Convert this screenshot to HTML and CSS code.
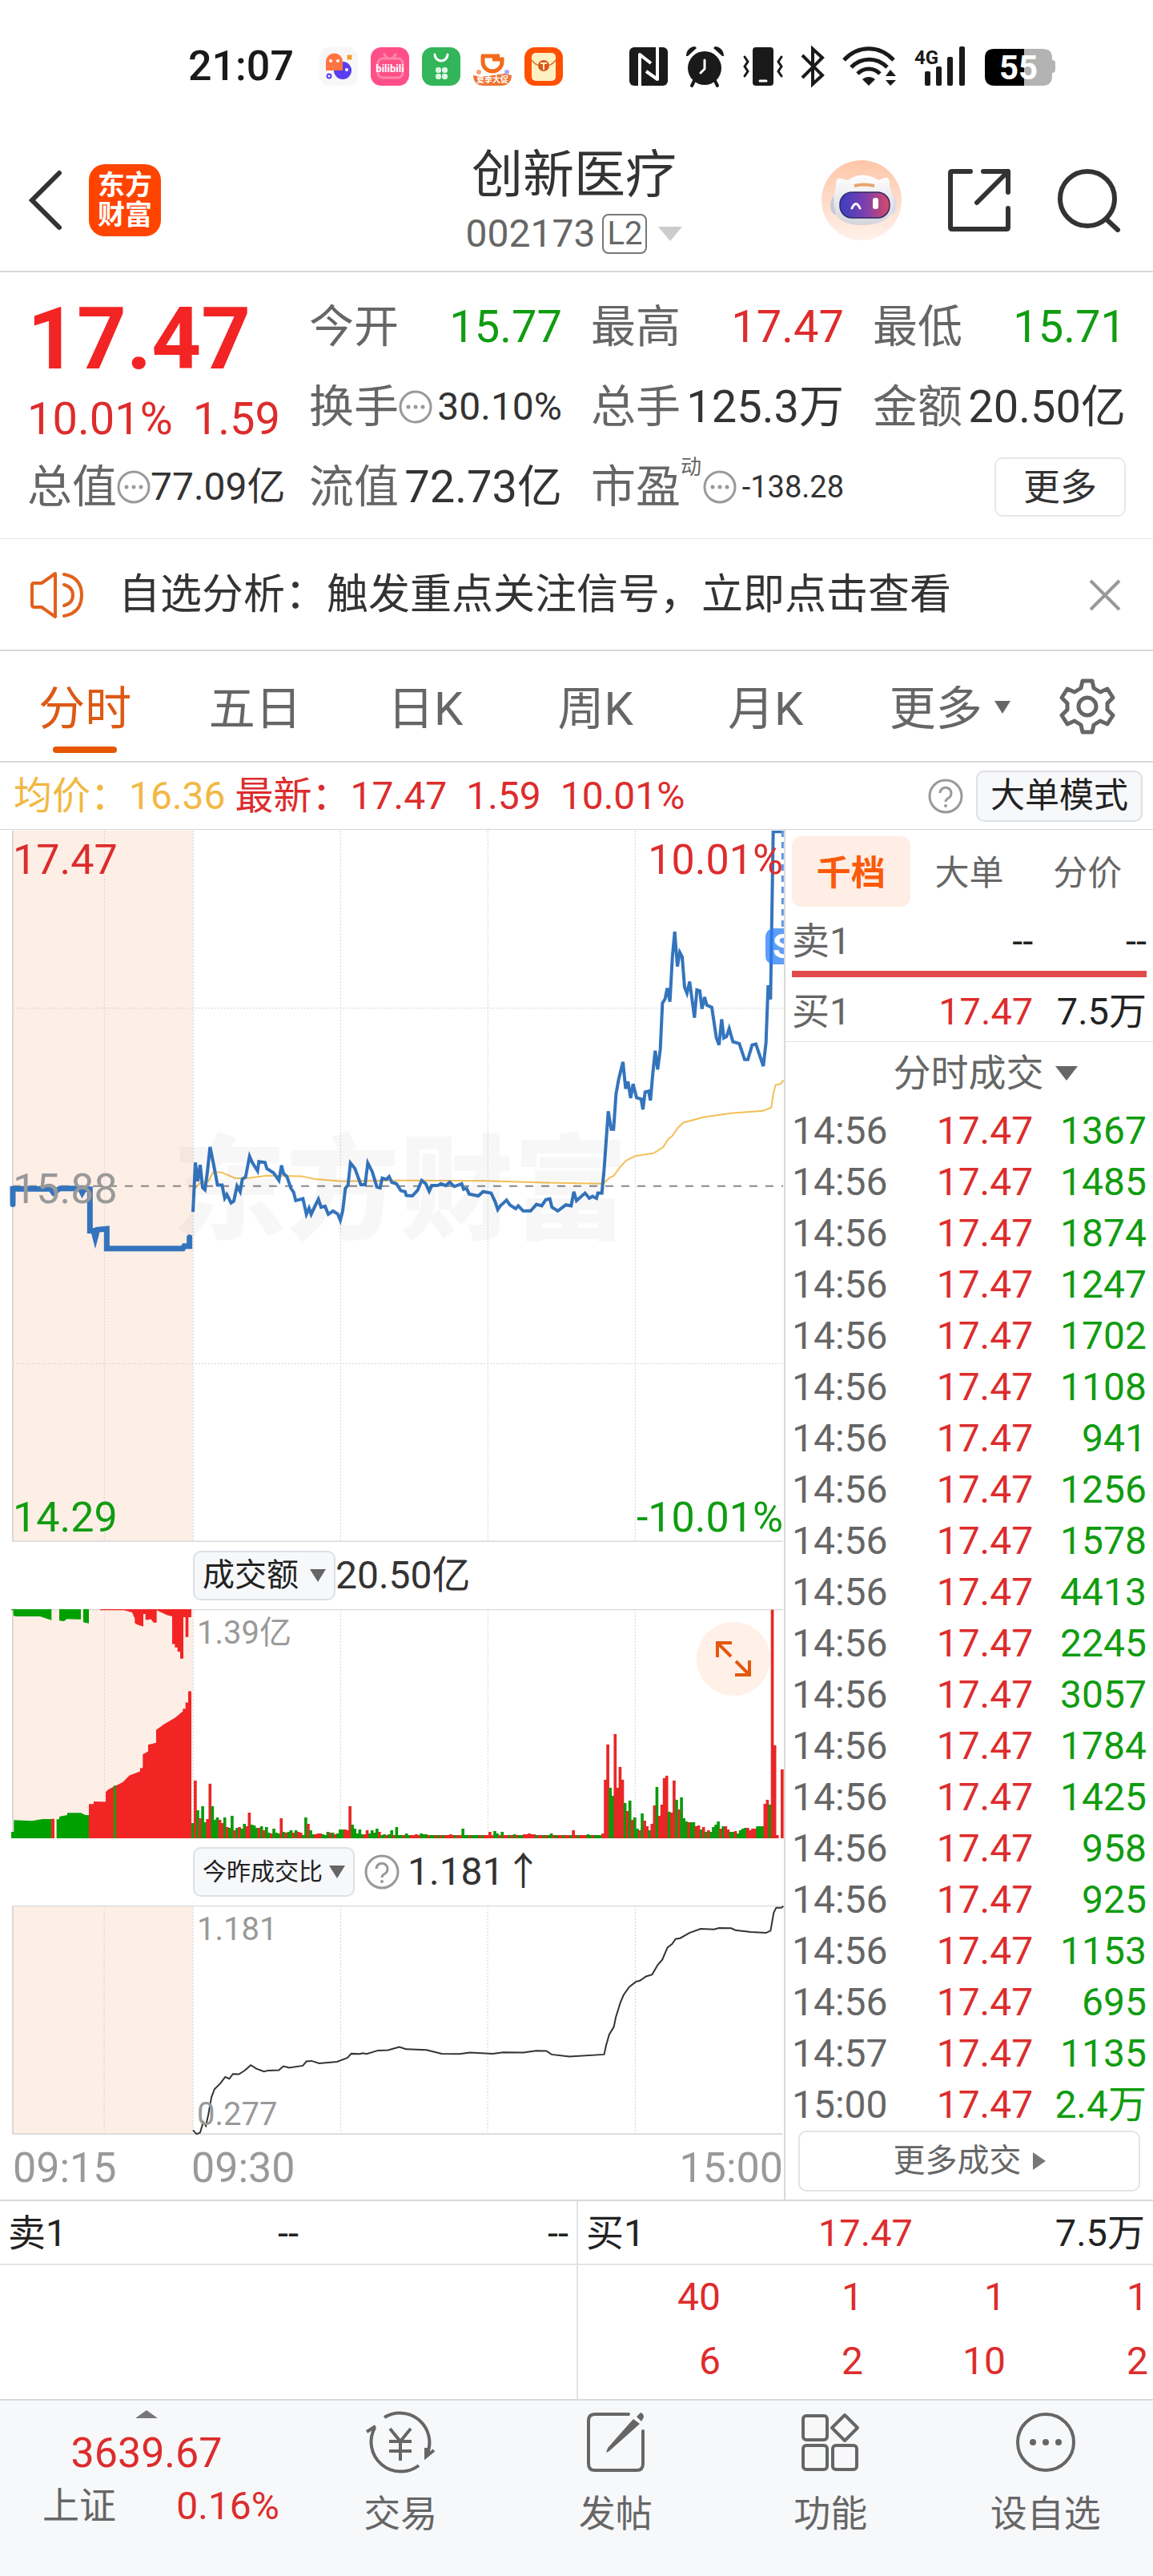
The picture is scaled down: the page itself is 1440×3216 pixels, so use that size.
FILE: index.html
```html
<!DOCTYPE html>
<html lang="zh-CN">

<head>
    <meta charset="utf-8">
    <meta name="viewport" content="width=device-width, initial-scale=1.0">
    <title>创新医疗 002173</title>
    <link rel="stylesheet" href="styles.css">
</head>

<body>
    <!-- 状态栏 -->
    <div class="status">
        <span class="clock">21:07</span>
        <div class="status-apps">
            <svg width="48" height="48" viewBox="0 0 48 48">
                <rect width="48" height="48" rx="13" fill="#f7f7f7"/>
                <circle cx="29" cy="29" r="11" fill="#5a3df0"/>
                <path d="M8 29V18a10 10 0 0 1 21 0v11z" fill="#ff7440"/>
                <circle cx="14" cy="17" r="2" fill="#fff"/><circle cx="23" cy="17" r="2" fill="#fff"/><circle cx="34" cy="28" r="2" fill="#fff"/>
                <circle cx="12" cy="36" r="2.5" fill="none" stroke="#5a3df0" stroke-width="2"/>
                <path d="M35 10l5 5m0-5l-5 5" stroke="#f59a23" stroke-width="3"/>
            </svg>
            <svg width="48" height="48" viewBox="0 0 48 48">
                <rect width="48" height="48" rx="13" fill="#ff4f88"/>
                <path d="M16 8l5 6m11-6l-5 6" stroke="#ff85ab" stroke-width="3"/>
                <rect x="9" y="14" width="31" height="24" rx="6" fill="none" stroke="#ff85ab" stroke-width="3"/>
                <text x="24" y="31" text-anchor="middle" class="bili">bilibili</text>
            </svg>
            <svg width="48" height="48" viewBox="0 0 48 48">
                <rect width="48" height="48" rx="13" fill="#33b55a"/>
                <path d="M16 9a8 8 0 0 0 16 0" fill="none" stroke="#fff" stroke-width="3" stroke-linecap="round"/>
                <g fill="#dff5e5"><rect x="17" y="25" width="7" height="7" rx="3"/><rect x="25" y="25" width="7" height="7" rx="3"/><rect x="17" y="33" width="7" height="7" rx="3"/><rect x="25" y="33" width="7" height="7" rx="3"/></g>
            </svg>
            <svg width="48" height="48" viewBox="0 0 48 48">
                <path d="M12 11v7a12 12 0 0 0 24 0v-3H24" fill="none" stroke="#f26a1b" stroke-width="5"/>
                <path d="M10 11h23" stroke="#f26a1b" stroke-width="5"/>
                <path d="M0 35l9 2 30-4 9 2c0 9-6 13-13 13H13C6 48 0 44 0 35z" fill="#ee7433"/>
                <circle cx="7" cy="31" r="3" fill="#f5a27a"/><circle cx="42" cy="31" r="3" fill="#a9a6f0"/>
                <text x="24" y="44" text-anchor="middle" class="promo">夏季大促</text>
            </svg>
            <svg width="48" height="48" viewBox="0 0 48 48">
                <rect width="48" height="48" rx="13" fill="#ff5000"/>
                <rect x="9" y="7" width="30" height="35" rx="5" fill="#fff0c4"/>
                <path d="M9 16c5 7 9 7 15 7s10 0 15-7" fill="none" stroke="#d9752c" stroke-width="1.5"/>
                <circle cx="24" cy="23" r="7" fill="#d9581c"/>
                <path d="M20 20h8m-4 0v8" stroke="#fff0c4" stroke-width="2"/>
            </svg>
        </div>
        <div class="status-sys">
            <svg width="48" height="50" viewBox="0 0 48 50">
                <rect y="1" width="48" height="48" rx="6" fill="#1a1a1a"/>
                <path d="M13 50V10L27 21M35 0V41L21 31" fill="none" stroke="#fff" stroke-width="4" stroke-linejoin="round"/>
            </svg>
            <svg width="50" height="50" viewBox="0 0 50 50">
                <path d="M11 43l-3 6m29-6l3 6" stroke="#1a1a1a" stroke-width="4" stroke-linecap="round"/>
                <circle cx="24" cy="27" r="21" fill="#1a1a1a"/>
                <path d="M1 12C1 4 7 0 12 0l2 2L3 12zM48 12C48 4 42 0 37 0l-2 2 11 10z" fill="#1a1a1a"/>
                <path d="M24 17v11l-5 5" fill="none" stroke="#fff" stroke-width="3" stroke-linecap="round"/>
            </svg>
            <svg width="50" height="50" viewBox="0 0 50 50" fill="none" stroke="#1a1a1a" stroke-width="3">
                <rect x="12" y="1" width="26" height="48" rx="4" fill="#1a1a1a" stroke="none"/>
                <path d="M2 13l4 6-4 6 4 6-4 6M48 13l-4 6 4 6-4 6 4 6" stroke-linecap="round"/>
                <path d="M21 43h8" stroke="#fff" stroke-linecap="round"/>
            </svg>
            <svg width="30" height="50" viewBox="0 0 30 50" fill="none" stroke="#1a1a1a" stroke-width="4">
                <path d="M2 11l25 25-12 11V3l12 11L2 39"/>
            </svg>
            <svg width="68" height="50" viewBox="0 0 68 50" fill="none" stroke="#1a1a1a" stroke-width="5">
                <path d="M2 17c18-19 44-19 62 0M11 26c13-13 32-13 45 0M19 34c8-8 20-8 28 0"/>
                <path d="M25 41c5-4 11-4 16 0l-8 8zM60 29l7 8H54zM60 49l7-7H54z" fill="#1a1a1a" stroke="none"/>
            </svg>
            <svg width="66" height="50" viewBox="0 0 66 50">
                <text x="0" y="22" class="net">4G</text>
                <g fill="#1a1a1a"><rect x="13" y="31" width="7" height="18" rx="2"/><rect x="27" y="25" width="7" height="24" rx="2"/><rect x="41" y="13" width="7" height="36" rx="2"/><rect x="56" y="0" width="7" height="49" rx="2"/></g>
            </svg>
            <svg width="88" height="50" viewBox="0 0 88 50">
                <path d="M49 3h23q12 0 12 11v3q4 0 4 4v8q0 4-4 4v4q0 12-12 12H49z" fill="#b3b3b3"/>
                <path d="M49 3H12Q0 3 0 14v23q0 12 12 12h37z" fill="#000"/>
                <text x="42" y="41" text-anchor="middle" class="battery">55</text>
            </svg>
        </div>
    </div>

    <!-- 标题栏 -->
    <header class="header">
        <div class="header-side">
            <button class="icon-btn" aria-label="返回">
                <svg width="46" height="76" viewBox="0 0 46 76" fill="none" stroke="#333" stroke-width="6" stroke-linecap="round"><path d="M40 4L6 38l34 34"/></svg>
            </button>
            <a class="logo" href="#">东方<br>财富</a>
        </div>
        <div class="title">
            <h1>创新医疗</h1>
            <button class="code">002173<span class="level">L2</span><i class="tri tri-light"></i></button>
        </div>
        <div class="header-side header-right">
            <button class="icon-btn" aria-label="智能助手">
                <svg width="100" height="100" viewBox="0 0 100 100">
                    <defs>
                        <linearGradient id="halo" x1="0" y1="0" x2="0" y2="1"><stop offset="0" stop-color="#fdc6a8"/><stop offset="1" stop-color="#fff1ea"/></linearGradient>
                        <linearGradient id="visor"><stop offset="0" stop-color="#3a3fc0"/><stop offset=".5" stop-color="#7c3fae"/><stop offset="1" stop-color="#d84a66"/></linearGradient>
                        <linearGradient id="helmet" x1="0" y1="0" x2="0" y2="1"><stop offset="0" stop-color="#fff"/><stop offset="1" stop-color="#d4d4dc"/></linearGradient>
                    </defs>
                    <circle cx="50" cy="50" r="50" fill="url(#halo)"/>
                    <ellipse cx="18" cy="56" rx="7" ry="12" fill="#c9c9d4"/><ellipse cx="87" cy="56" rx="7" ry="12" fill="#dcdce6"/>
                    <path d="M18 34q-1-14 7-11l8 2q18-13 38 0l8-3q7-2 6 11 7 14 3 29-5 19-37 19T17 62q-4-15 1-28z" fill="url(#helmet)"/>
                    <rect x="23" y="40" width="62" height="32" rx="15" fill="url(#visor)" stroke="#2c2a66" stroke-width="1.5"/>
                    <path d="M38 60q5-11 10 0" fill="none" stroke="#fff" stroke-width="3" stroke-linecap="round"/>
                    <rect x="64" y="47" width="7" height="14" rx="3" fill="#fff"/>
                    <path d="M41 32q12-3 25 0" stroke="#e7a56a" stroke-width="4" fill="none"/>
                </svg>
            </button>
            <button class="icon-btn" aria-label="分享">
                <svg width="78" height="80" viewBox="0 0 78 80" fill="none" stroke="#333" stroke-width="6" stroke-linecap="round" stroke-linejoin="round"><path d="M28 4H5q-2 0-2 2v68q0 2 2 2h68q2 0 2-2V50M44 4h31v26M75 4L36 43"/></svg>
            </button>
            <button class="icon-btn" aria-label="搜索">
                <svg width="80" height="80" viewBox="0 0 80 80" fill="none" stroke="#333" stroke-width="6" stroke-linecap="round"><circle cx="38" cy="38" r="34"/><path d="M62 64l14 13"/></svg>
            </button>
        </div>
    </header>

    <!-- 行情数据 -->
    <section class="quote">
        <div class="price-box">
            <div class="price">17.47</div>
            <div class="change"><span>10.01%</span><span>1.59</span></div>
        </div>
        <div class="item"><span>今开</span><b class="green">15.77</b></div>
        <div class="item"><span>最高</span><b class="red">17.47</b></div>
        <div class="item"><span>最低</span><b class="green">15.71</b></div>
        <div class="item"><span>换手</span><svg class="dots"><use href="#dots"/></svg><b class="mid">30.10%</b></div>
        <div class="item"><span>总手</span><b>125.3万</b></div>
        <div class="item"><span>金额</span><b>20.50亿</b></div>
        <div class="item"><span>总值</span><svg class="dots"><use href="#dots"/></svg><b class="mid">77.09亿</b></div>
        <div class="item"><span>流值</span><b>72.73亿</b></div>
        <div class="item"><span>市盈<sup>动</sup></span><svg class="dots dots-pe"><use href="#dots"/></svg><b class="small">-138.28</b></div>
        <div class="item"><button class="more">更多</button></div>
    </section>

    <!-- 公用图标 -->
    <svg class="defs" aria-hidden="true">
        <symbol id="dots" viewBox="0 0 42 42">
            <circle cx="21" cy="21" r="19" fill="none" stroke="#999" stroke-width="3"/>
            <circle cx="12" cy="21" r="2.5" fill="#999"/><circle cx="21" cy="21" r="2.5" fill="#999"/><circle cx="30" cy="21" r="2.5" fill="#999"/>
        </symbol>
        <symbol id="help" viewBox="0 0 44 44">
            <circle cx="22" cy="22" r="20" fill="none" stroke="#999" stroke-width="3"/>
            <path d="M15 18a7 7 0 1 1 11 6q-4 2-4 5" fill="none" stroke="#999" stroke-width="3"/><circle cx="22" cy="34" r="2" fill="#999"/>
        </symbol>
    </svg>

    <!-- 提示条 -->
    <div class="notice">
        <svg width="68" height="58" viewBox="0 0 68 58" fill="none" stroke="#e2611c" stroke-width="4" stroke-linejoin="round" stroke-linecap="round">
            <path d="M4 14q-2 0-2 3v24q0 3 3 3h9l17 12V2L14 14zM42 3q22 4 22 26T42 55M42 16q11 3 11 13t-11 13"/>
        </svg>
        <a href="#">自选分析：触发重点关注信号，立即点击查看</a>
        <button class="icon-btn" aria-label="关闭">
            <svg width="40" height="40" viewBox="0 0 40 40" stroke="#999" stroke-width="4"><path d="M2 2l36 36M38 2L2 38"/></svg>
        </button>
    </div>

    <!-- 周期切换 -->
    <nav class="tabs">
        <button class="tab active">分时</button>
        <button class="tab">五日</button>
        <button class="tab">日K</button>
        <button class="tab">周K</button>
        <button class="tab">月K</button>
        <button class="tab">更多<i class="tri tri-small"></i></button>
        <button class="icon-btn gear" aria-label="设置">
            <svg width="70" height="70" viewBox="0 0 70 70" fill="none" stroke="#666" stroke-width="5" stroke-linejoin="round">
                <path d="M29 3h12l2 9 8 5 9-4 7 11-7 7v8l7 7-7 11-9-4-8 5-2 9H29l-2-9-8-5-9 4-7-11 7-7v-8l-7-7 7-11 9 4 8-5z"/><circle cx="35" cy="35" r="11"/>
            </svg>
        </button>
    </nav>

    <div class="latest">
        <span class="avg">均价：16.36</span>
        <span class="red">最新：17.47</span>
        <span class="red">1.59</span>
        <span class="red">10.01%</span>
        <svg class="help"><use href="#help"/></svg>
        <button class="pill">大单模式</button>
    </div>

    <main class="main">
        <!-- 分时图 -->
        <div class="charts">
            <div class="chart price-chart">
                <span class="watermark">东方财富</span>
                <svg class="plot" viewBox="0 29 2937 1513" preserveAspectRatio="none">
                    <rect class="premarket" x="48" y="29" width="676" height="1513"/>
                    <path class="grid" d="M391 29V1542M724 29V1542M1276 29V1542M1828 29V1542M2380 29V1542M48 407H2934M48 1163H2934"/>
                    <path class="frame" d="M48 29V1541H2934"/>
                    <path class="zero" d="M48 785H2934"/>
                    <polyline class="line avg-line" points="732,790 750,778 780,775 800,755 830,756 880,768 920,769 1000,763 1130,764 1180,770 1280,775 1470,773 1820,774 2040,778 2260,780 2285,767 2300,763 2320,747 2345,731 2380,721 2450,715 2485,702 2505,684 2518,679 2540,661 2560,650 2640,638 2740,630 2860,625 2890,618 2897,590 2906,570 2925,568 2935,560"/>
                    <polyline class="line pre-line" points="48,824 48,791 190,791 200,799 225,790 300,790 308,799 315,792 337,792 337,880 350,880 357,895 365,878 400,876 400,918 685,918 690,913 710,913 710,894"/>
                    <polyline class="line" points="723,840 732,735 741,775 750,740 759,788 768,793 777,755 787,702 800,738 815,783 832,783 842,811 850,803 866,821 876,817 888,785 900,797 908,770 920,766 935,722 945,735 965,753 970,733 993,735 1000,748 1025,757 1045,773 1055,741 1062,758 1075,765 1090,790 1100,798 1108,816 1135,812 1148,845 1158,832 1166,845 1180,828 1193,813 1203,830 1218,828 1230,845 1248,838 1266,845 1275,858 1284,838 1294,790 1304,783 1313,736 1330,748 1352,782 1368,782 1378,736 1395,755 1412,787 1424,789 1432,768 1448,771 1458,765 1468,777 1485,780 1502,795 1518,797 1522,805 1545,806 1565,794 1580,773 1595,780 1608,796 1618,784 1640,784 1652,780 1670,784 1685,777 1702,786 1730,780 1737,792 1748,790 1758,802 1792,806 1810,797 1840,800 1855,818 1865,835 1875,827 1898,815 1910,825 1932,833 1942,827 1960,838 1988,838 2010,824 2030,827 2045,814 2060,812 2068,830 2090,838 2120,825 2140,827 2150,797 2160,816 2192,800 2208,811 2220,807 2235,811 2240,800 2255,800 2263,753 2279,626 2290,664 2299,664 2308,590 2318,558 2334,521 2344,578 2353,563 2363,598 2372,568 2385,597 2402,600 2409,622 2417,585 2430,583 2437,603 2446,545 2455,497 2464,537 2474,494 2482,396 2492,387 2500,364 2510,393 2519,300 2528,244 2538,318 2547,288 2556,298 2565,362 2574,375 2584,350 2602,427 2611,368 2622,370 2630,408 2640,383 2648,400 2667,405 2684,470 2694,485 2704,430 2712,470 2722,467 2732,450 2746,478 2770,482 2790,516 2802,516 2818,485 2832,483 2860,530 2870,480 2878,358 2887,388 2897,31 2935,31"/>
                    <path class="mark" d="M2932 29V236"/>
                </svg>
                <span class="badge">S</span>
                <div class="labels">
                    <div><span class="red">17.47</span><span class="red">10.01%</span></div>
                    <div><span>15.88</span></div>
                    <div><span class="green">14.29</span><span class="green">-10.01%</span></div>
                </div>
            </div>

            <!-- 成交额 -->
            <div class="chart-head">
                <button class="pill">成交额<i class="tri tri-small"></i></button>
                <span>20.50亿</span>
            </div>
            <div class="chart sub-chart">
                <svg class="plot" id="volume" viewBox="0 238 2937 857" preserveAspectRatio="none">
                    <rect class="premarket" x="48" y="238" width="676" height="857"/>
                    <path class="grid" d="M391 238V1095M724 238V1095M1276 238V1095M1828 238V1095M2380 238V1095"/>
                    <path class="frame" d="M48 1095V239H2934"/>
                    <path fill="#00a000" d="M42 237H193V279L150 265H60L50 262V242H42ZM222 237H303V276L250 275L240 283L222 281ZM312 237H333V291L312 287ZM42 1095V1071H52V1027L120 1030L160 1023H192V1095ZM212 1095V1024H222V1014L252 1008V1000H303L320 1008H333V1095Z"/>
                    <path fill="#f22424" d="M375 237H717V268H706V342H695V268H687V423H675V397H665V381H655V368H645V265L625 260L590 243H587V288H575L565 275L556 278H545V256H537V303L515 296L505 290V273L495 250L465 242H375ZM192 1022H204V1095H192ZM333 1095V967H351V957L396 959V922L406 912L460 885L485 860L525 845V832H535V781L555 770V745L585 738V690L615 668L655 645L685 620V610H695V587H705V545H717V1095Z"/>
                    <path fill="#3f8a12" d="M425 898H436V1095H425Z"/>
                </svg>
                <span class="top-label">1.39亿</span>
                <button class="expand" aria-label="放大">
                    <svg width="44" height="44" viewBox="0 0 44 44" fill="none" stroke="#e2590f" stroke-width="4"><path d="M2 20V2h18M2 2l17 17M42 24v18H24M42 42L25 25"/></svg>
                </button>
            </div>

            <!-- 今昨成交比 -->
            <div class="chart-head">
                <button class="pill pill-small">今昨成交比<i class="tri tri-small"></i></button>
                <svg class="help"><use href="#help"/></svg>
                <span>1.181↑</span>
            </div>
            <div class="chart sub-chart">
                <svg class="plot" viewBox="0 268 1535 857" preserveAspectRatio="none">
                    <rect class="premarket" x="25" y="268" width="353" height="857"/>
                    <path class="grid" d="M204 268V1125M378 268V1125M667 268V1125M955 268V1125M1244 268V1125"/>
                    <path class="frame" d="M25 1123V269H1533M25 1123H1533"/>
                    <polyline class="line ratio-line" points="378,1108 385,1123 392,1117 398,1078 403,1092 408,1050 414,985 420,955 432,932 441,909 449,916 456,898 468,899 480,884 491,865 502,878 517,889 525,885 546,884 555,869 566,875 593,867 600,851 610,849 625,858 660,852 680,838 688,822 705,823 710,820 718,823 740,810 760,809 782,797 795,805 835,808 865,822 900,823 920,818 965,822 985,817 1025,818 1050,811 1070,812 1080,825 1115,833 1183,825 1187,790 1193,750 1202,722 1206,685 1215,630 1221,603 1232,573 1245,553 1253,549 1265,533 1277,526 1288,490 1297,470 1307,425 1316,412 1323,393 1332,390 1350,370 1372,355 1398,357 1408,352 1432,353 1440,360 1470,367 1500,370 1509,362 1515,295 1520,276 1530,276 1534,270"/>
                </svg>
                <span class="top-label">1.181</span>
                <span class="bottom-label">0.277</span>
            </div>
            <div class="axis"><span>09:15</span><span>09:30</span><span>15:00</span></div>
        </div>

        <!-- 盘口 -->
        <aside class="side">
            <div class="side-tabs">
                <button class="active">千档</button>
                <button>大单</button>
                <button>分价</button>
            </div>
            <div class="level-row"><span>卖1</span><b>--</b><b>--</b></div>
            <div class="ratio-bar"></div>
            <div class="level-row"><span>买1</span><b class="red">17.47</b><b>7.5万</b></div>
            <button class="side-title">分时成交<i class="tri"></i></button>
            <table class="trades">
                <tr><td>14:56</td><td>17.47</td><td>1367</td></tr>
                <tr><td>14:56</td><td>17.47</td><td>1485</td></tr>
                <tr><td>14:56</td><td>17.47</td><td>1874</td></tr>
                <tr><td>14:56</td><td>17.47</td><td>1247</td></tr>
                <tr><td>14:56</td><td>17.47</td><td>1702</td></tr>
                <tr><td>14:56</td><td>17.47</td><td>1108</td></tr>
                <tr><td>14:56</td><td>17.47</td><td>941</td></tr>
                <tr><td>14:56</td><td>17.47</td><td>1256</td></tr>
                <tr><td>14:56</td><td>17.47</td><td>1578</td></tr>
                <tr><td>14:56</td><td>17.47</td><td>4413</td></tr>
                <tr><td>14:56</td><td>17.47</td><td>2245</td></tr>
                <tr><td>14:56</td><td>17.47</td><td>3057</td></tr>
                <tr><td>14:56</td><td>17.47</td><td>1784</td></tr>
                <tr><td>14:56</td><td>17.47</td><td>1425</td></tr>
                <tr><td>14:56</td><td>17.47</td><td>958</td></tr>
                <tr><td>14:56</td><td>17.47</td><td>925</td></tr>
                <tr><td>14:56</td><td>17.47</td><td>1153</td></tr>
                <tr><td>14:56</td><td>17.47</td><td>695</td></tr>
                <tr><td>14:57</td><td>17.47</td><td>1135</td></tr>
                <tr><td>15:00</td><td>17.47</td><td>2.4万</td></tr>
            </table>
            <button class="more-trades">更多成交<i class="tri-right"></i></button>
        </aside>
    </main>

    <!-- 委托队列 -->
    <section class="orders">
        <div class="order-col">
            <div class="order-head"><span>卖1</span><span>--</span><span>--</span></div>
        </div>
        <div class="order-col">
            <div class="order-head"><span>买1</span><span class="red">17.47</span><span>7.5万</span></div>
            <div class="queue">
                <span>40</span><span>1</span><span>1</span><span>1</span>
                <span>6</span><span>2</span><span>10</span><span>2</span>
            </div>
        </div>
    </section>

    <!-- 底部导航 -->
    <footer class="footer">
        <a class="index" href="#">
            <i class="tri-up"></i>
            <strong>3639.67</strong>
            <span class="index-row"><span>上证</span><span class="red">0.16%</span></span>
        </a>
        <a class="nav-item" href="#">
            <svg width="88" height="80" viewBox="0 0 88 80" fill="none" stroke="#666" stroke-width="4">
                <path d="M24 9a37 37 0 0 1 53 47M67 69A37 37 0 0 1 12 22M2 27l11-7M86 50l-10 8V47"/>
                <path d="M31 23l13 16 13-16M30 39h28M30 51h28M44 39v24"/>
            </svg>
            <span>交易</span>
        </a>
        <a class="nav-item" href="#">
            <svg width="76" height="80" viewBox="0 0 76 80" fill="none" stroke="#666" stroke-width="4">
                <path d="M54 5H12q-8 0-8 8v54q0 8 8 8h52q8 0 8-8V26" stroke-linecap="round"/>
                <path d="M60 11l8 6-38 34-4 2 2-6zM64 8l5-5q4 1 4 6l-3 5z" fill="#666" stroke="none"/>
            </svg>
            <span>发帖</span>
        </a>
        <a class="nav-item" href="#">
            <svg width="76" height="80" viewBox="0 0 76 80" fill="none" stroke="#666" stroke-width="4" stroke-linejoin="round">
                <rect x="4" y="7" width="30" height="30" rx="4"/><rect x="4" y="44" width="30" height="30" rx="4"/><rect x="41" y="44" width="30" height="30" rx="4"/><path d="M56 6l16 16-16 16-16-16z"/>
            </svg>
            <span>功能</span>
        </a>
        <a class="nav-item" href="#">
            <svg width="76" height="80" viewBox="0 0 76 80" fill="none" stroke="#666" stroke-width="4">
                <circle cx="38" cy="40" r="35"/><g fill="#666" stroke="none"><circle cx="22" cy="40" r="4"/><circle cx="38" cy="40" r="4"/><circle cx="54" cy="40" r="4"/></g>
            </svg>
            <span>设自选</span>
        </a>
    </footer>

    <script src="volume.js"></script>
</body>

</html>
```
FILE: styles.css
```css
* {
    box-sizing: border-box;
}

body {
    margin: 0;
    background-color: #fff;
    color: #333;
    font-family: Roboto, "Noto Sans CJK SC", sans-serif;
    font-size: 48px;
    line-height: 1;
}

button {
    padding: 0;
    border: none;
    background: none;
    color: inherit;
    font: inherit;
    cursor: pointer;
}

a {
    color: inherit;
    text-decoration: none;
}

b {
    font-weight: 400;
}

svg {
    display: block;
    flex: none;
}

.defs {
    position: absolute;
    width: 0;
    height: 0;
}

.red { color: #dd2c2c; }
.green { color: #109c10; }

.icon-btn {
    display: flex;
}

/* 小三角 */
.tri,
.tri-up,
.tri-right {
    display: inline-block;
    flex: none;
    border: 14px solid transparent;
    border-top: 18px solid #666;
    border-bottom: 0;
}
.tri-light {
    border-width: 18px 15px 0;
    border-top-color: #ccc;
}
.tri-small {
    border-width: 16px 10px 0;
}
.tri-up {
    border-width: 0 14px 10px;
    border-bottom: 10px solid #77777b;
}
.tri-right {
    border: 11px solid transparent;
    border-left: 16px solid #777;
    border-right: 0;
}

/* 状态栏 */
.status {
    display: flex;
    align-items: center;
    height: 166px;
    padding: 0 122px 0 235px;
    color: #1a1a1a;
}
.status svg {
    overflow: visible;
}
.clock {
    font-size: 52px;
    font-weight: 500;
}
.status-apps {
    display: flex;
    gap: 16px;
    margin-left: 32px;
}
.status-sys {
    display: flex;
    justify-content: space-between;
    width: 532px;
    margin-left: auto;
}
.bili {
    fill: #fff;
    font-size: 13px;
    font-weight: 700;
}
.promo {
    fill: #fff;
    font-size: 10px;
    font-weight: 700;
}
.net {
    fill: #1a1a1a;
    font-size: 24px;
    font-weight: 700;
}
.battery {
    fill: #fff;
    font-size: 42px;
    font-weight: 700;
}

/* 标题栏 */
.header {
    display: flex;
    align-items: center;
    justify-content: space-between;
    height: 174px;
    padding: 0 40px 4px 34px;
    border-bottom: 2px solid #d9d9d9;
}
.header-side {
    display: flex;
    flex: 1;
    align-items: center;
    gap: 31px;
}
.header-right {
    justify-content: flex-end;
    gap: 58px;
}
.logo {
    padding: 8px 11px;
    border-radius: 20px;
    background-color: #ff4400;
    color: #fff;
    font-size: 34px;
    font-weight: 700;
    line-height: 37px;
}
.title {
    display: flex;
    flex-direction: column;
    align-items: center;
    gap: 16px;
    padding-top: 4px;
}
h1 {
    margin: 0;
    font-size: 64px;
    font-weight: 400;
}
.code {
    display: flex;
    align-items: center;
    color: #666;
}
.level {
    margin: 0 14px 0 9px;
    padding: 3px 4px;
    border: 2px solid #777;
    border-radius: 8px;
    font-size: 40px;
}

/* 行情数据 */
.quote {
    display: grid;
    grid-template-columns: repeat(4, minmax(0, 1fr));
    grid-auto-rows: 100px;
    column-gap: 36px;
    padding: 18px 34px 14px;
    border-bottom: 1px solid #e8e8e8;
    font-size: 56px;
}
.price-box {
    grid-row: span 2;
    color: #dd2c2c;
}
.price {
    color: #f22424;
    font-size: 108px;
    font-weight: 700;
    line-height: 130px;
}
.change {
    display: flex;
    justify-content: space-between;
    line-height: 70px;
}
.item {
    display: flex;
    align-items: center;
    white-space: nowrap;
}
.item > span {
    position: relative;
    color: #666;
}
.item b,
.item button {
    margin-left: auto;
}
.item .mid {
    font-size: 48px;
}
.item .small {
    font-size: 38px;
}
.item sup {
    position: absolute;
    left: 100%;
    top: -10px;
    font-size: 26px;
}
.dots {
    width: 42px;
    height: 42px;
}
.dots-pe {
    margin-left: 28px;
}
.more {
    width: 164px;
    height: 74px;
    border: 2px solid #e8e8e8;
    border-radius: 10px;
    font-size: 46px;
}

/* 提示条 */
.notice {
    display: flex;
    align-items: center;
    height: 140px;
    padding: 2px 40px 0 38px;
    border-bottom: 2px solid #d9d9d9;
    font-size: 52px;
}
.notice a {
    flex: 1;
    margin-left: 42px;
}

/* 周期切换 */
.tabs {
    display: flex;
    height: 139px;
    border-bottom: 2px solid #d9d9d9;
    color: #666;
    font-size: 58px;
}
.tab {
    position: relative;
    flex: 1;
    padding-top: 6px;
}
.tab.active {
    color: #dc5a14;
}
.tab.active::after {
    content: "";
    position: absolute;
    left: 50%;
    bottom: 10px;
    width: 80px;
    height: 8px;
    margin-left: -40px;
    border-radius: 4px;
    background-color: #e65500;
}
.tab .tri {
    margin: 0 -35px 14px 15px;
}
.gear {
    align-items: center;
    justify-content: center;
    width: 165px;
}

.latest {
    display: flex;
    align-items: center;
    height: 84px;
    padding: 0 13px 0 17px;
    border-bottom: 1px solid #d5d5d5;
    white-space: nowrap;
}
.latest span {
    margin-right: 24px;
}
.latest .avg {
    margin-right: 12px;
    color: #f2b844;
}
.help {
    width: 44px;
    height: 44px;
}
.latest .help {
    margin: 0 16px 0 auto;
}
.pill {
    display: flex;
    align-items: center;
    justify-content: center;
    gap: 14px;
    height: 64px;
    padding: 0 16px;
    border: 2px solid #dde0e6;
    border-radius: 10px;
    background-color: #f7f8fa;
    color: #222;
    font-size: 43px;
}

/* 主区域 */
.main {
    display: grid;
    grid-template-columns: 979fr 461fr;
    border-bottom: 2px solid #d9d9d9;
}
.charts {
    min-width: 0;
    padding-top: 1px;
}
.chart {
    position: relative;
    overflow: hidden;
}
.price-chart {
    height: 888px;
}
.sub-chart {
    height: 286px;
}
.plot {
    position: relative;
    width: 100%;
    height: 100%;
}
.plot path,
.plot polyline {
    vector-effect: non-scaling-stroke;
}
.premarket {
    fill: #fdeee6;
}
.grid {
    fill: none;
    stroke: #d4d4d4;
    stroke-dasharray: 2 2;
}
.frame {
    fill: none;
    stroke: #d9d9d9;
    stroke-width: 2;
}
.zero {
    stroke: #888;
    stroke-width: 2;
    stroke-dasharray: 10 10;
}
.line {
    fill: none;
    stroke: #3474bd;
    stroke-width: 4;
}
.pre-line {
    stroke-width: 7;
    stroke-linecap: round;
}
.avg-line {
    stroke: #f3bf58;
    stroke-width: 2;
}
.ratio-line {
    stroke: #333;
    stroke-width: 2;
}
.mark {
    stroke: #5f97e0;
    stroke-width: 3;
    stroke-dasharray: 8 6;
}
.watermark {
    position: absolute;
    z-index: 1;
    left: 22%;
    top: 366px;
    color: rgba(0, 0, 0, 0.03);
    font-family: "Noto Sans CJK SC", sans-serif;
    font-size: 142px;
    font-weight: 900;
}
.badge {
    position: absolute;
    right: -21px;
    top: 122px;
    width: 44px;
    height: 45px;
    border-radius: 10px;
    background-color: rgba(40, 125, 245, 0.75);
    color: #fff;
    font-size: 42px;
    font-weight: 700;
    line-height: 45px;
    text-align: center;
}
.labels {
    position: absolute;
    inset: 0;
    display: flex;
    flex-direction: column;
    justify-content: space-between;
    padding: 11px 1px 4px 16px;
    color: #999;
    font-size: 52px;
}
.labels div {
    display: flex;
    justify-content: space-between;
}
.chart-head {
    display: flex;
    align-items: center;
    height: 84px;
    padding-left: 241px;
    white-space: nowrap;
}
.chart-head .pill {
    height: 62px;
    padding: 0 10px;
    font-size: 40px;
}
.chart-head .pill-small {
    gap: 8px;
    font-size: 30px;
}
.chart-head .help {
    margin: 0 10px 0 12px;
}
.top-label,
.bottom-label {
    position: absolute;
    left: 246px;
    top: 10px;
    color: #999;
    font-size: 40px;
}
.bottom-label {
    top: auto;
    bottom: 5px;
}
.expand {
    position: absolute;
    right: 17px;
    top: 16px;
    display: flex;
    align-items: center;
    justify-content: center;
    width: 92px;
    height: 92px;
    border-radius: 50%;
    background-color: #fff0e8;
}
.axis {
    display: flex;
    align-items: center;
    height: 81px;
    padding: 2px 1px 0 16px;
    color: #999;
    font-size: 52px;
}
.axis span {
    width: 223px;
}
.axis span:last-child {
    width: auto;
    margin-left: auto;
}

/* 盘口 */
.side {
    display: flex;
    flex-direction: column;
    min-width: 0;
    padding: 8px 8px 10px;
    border-left: 2px solid #d9d9d9;
}
.side-tabs {
    display: flex;
    height: 88px;
    color: #666;
    font-size: 43px;
}
.side-tabs button {
    flex: 1;
    padding-top: 4px;
    border-radius: 12px;
}
.side-tabs .active {
    background-color: #ffeee5;
    color: #fa5a0a;
    font-weight: 700;
}
.level-row {
    display: grid;
    grid-template-columns: 24% 44% 32%;
    align-items: center;
    height: 80px;
    padding-top: 4px;
    color: #222;
    font-size: 47px;
    text-align: right;
}
.level-row span {
    color: #666;
    text-align: left;
}
.level-row .red {
    color: #dd2c2c;
}
.ratio-bar {
    height: 8px;
    background-color: #e24a4a;
}
.side-title {
    display: flex;
    align-items: center;
    justify-content: center;
    gap: 14px;
    height: 78px;
    margin: 0 -8px;
    padding-left: 40px;
    border-top: 1px solid #e3e3e3;
    color: #666;
    font-size: 47px;
}
.trades {
    width: 100%;
    margin-top: 2px;
    border-collapse: collapse;
    table-layout: fixed;
}
.trades td {
    height: 64px;
    padding: 0;
    color: #109c10;
    text-align: right;
}
.trades td:first-child {
    width: 28%;
    color: #666;
    text-align: left;
}
.trades td:nth-child(2) {
    width: 40%;
    color: #dd2c2c;
}
.more-trades {
    display: flex;
    align-items: center;
    justify-content: center;
    gap: 14px;
    height: 76px;
    margin: 0 8px;
    border: 2px solid #e3e3e3;
    border-radius: 10px;
    color: #666;
    font-size: 40px;
}

/* 委托队列 */
.orders {
    display: grid;
    grid-template-columns: 1fr 1fr;
    border-bottom: 2px solid #d9d9d9;
}
.order-col + .order-col {
    border-left: 2px solid #e3e3e3;
}
.order-head {
    display: grid;
    grid-template-columns: 1fr 1fr 1fr;
    align-items: center;
    height: 80px;
    padding: 0 10px;
    border-bottom: 2px solid #e3e3e3;
    color: #222;
    font-size: 47px;
    text-align: center;
}
.order-head span:first-child {
    text-align: left;
}
.order-head span:last-child {
    text-align: right;
}
.queue {
    display: grid;
    grid-template-columns: repeat(4, 1fr);
    grid-auto-rows: 80px;
    align-items: center;
    padding: 0 6px 7px 0;
    color: #dd2c2c;
    text-align: right;
}

/* 底部导航 */
.footer {
    display: flex;
    height: 220px;
    background-color: #f7f8fa;
    color: #666;
    font-size: 46px;
}
.index {
    display: flex;
    flex-direction: column;
    align-items: center;
    width: 366px;
    padding-top: 12px;
}
.index strong {
    margin: 18px 0 16px;
    color: #dd2c2c;
    font-size: 52px;
    font-weight: 400;
}
.index-row {
    display: flex;
    justify-content: space-between;
    width: 296px;
    margin-left: 36px;
}
.index-row .red {
    font-size: 48px;
}
.nav-item {
    display: flex;
    flex: 1;
    flex-direction: column;
    align-items: center;
    gap: 26px;
    padding-top: 12px;
}
```
FILE: volume.js
```js
// 每分钟成交额：颜色(r涨 g跌) + 高度
const volume = `g19 r72 g35 r25 g40 g20 r24 r68 g40 g23 g26 r23 r19 g26 r14 g13 g28 r10 g13 r14
g12 g18 r15 r32 g17 g16 g13 r13 g15 r10 g14 g7 r6 g12 g7 g6 r25 g8 r7 g8
g10 r7 g10 r8 r7 g4 g26 r18 g10 g5 r5 r6 r6 g5 g4 g8 r7 g7 r5 g6
g11 g11 r11 r10 r40 g17 g12 g6 g11 g5 r5 r10 g6 g10 g7 g12 r8 g4 g5 r4
g5 g10 r4 g14 g4 g4 r4 g6 g4 r4 r4 r5 r4 g6 g5 g5 r4 g4 g4 r4
g4 r4 g4 r4 r4 r5 r4 g4 r4 r4 g12 g4 g4 r4 g4 g4 g4 r4 g4 r4
r4 r8 r4 g9 g6 r4 g8 r4 r4 g4 r4 g5 r4 g4 g4 r5 r5 r6 r5 r5
g4 r4 r4 g4 r4 g4 g6 r4 g4 r4 r4 g4 r4 r4 g4 r10 r4 g4 r4 r4
r4 g5 g4 r4 g4 g4 g4 r6 r73 r117 g63 g53 r130 r63 r89 r73 g44 r34 g47 r23
g26 g12 r10 g31 r22 r15 g10 r18 r41 g64 r28 r42 r75 r78 g33 r32 r72 g48 r36 g51
g25 g21 r20 g20 g20 r15 r16 g11 r14 g8 r10 g8 g14 g17 g21 r12 g15 r15 r11 g8
g8 r9 g6 g10 g12 g13 r13 r10 r12 r12 g15 g15 g15 r43 r48 g42 r285 r116 r4 r0 r86`.split(/\s+/);

const svg = document.getElementById('volume');

// 画柱子
volume.forEach((item, i) => {
    const h = Number(item.slice(1)) * 3;
    const bar = document.createElementNS('http://www.w3.org/2000/svg', 'rect');
    bar.setAttribute('x', 717 + i * 9.2);
    bar.setAttribute('y', 1095 - h);
    bar.setAttribute('width', 11);
    bar.setAttribute('height', h);
    bar.setAttribute('fill', item[0] === 'r' ? '#e92626' : '#0a9a0a');
    svg.appendChild(bar);
});
```
